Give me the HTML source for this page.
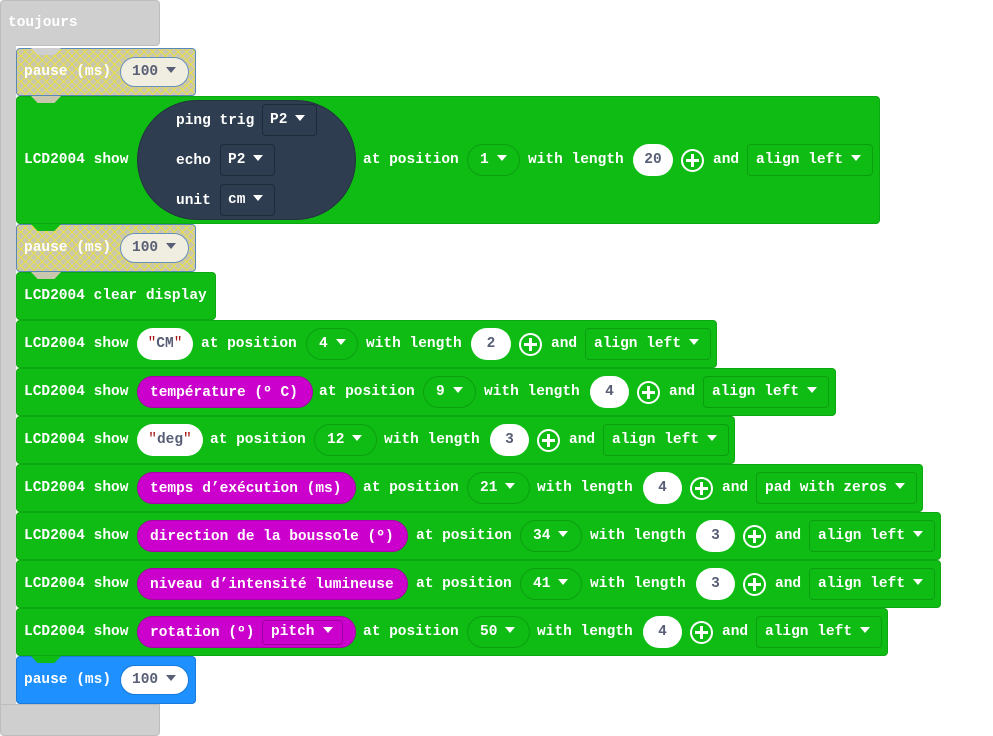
<!DOCTYPE html>
<html><head><meta charset="utf-8"><style>
*{box-sizing:border-box;margin:0;padding:0}
body{width:993px;height:736px;background:#fff;position:relative;overflow:hidden;font-family:"Liberation Mono",monospace;font-weight:bold;font-size:14.5px;color:#fff}
.a{position:absolute}
.blk{position:absolute;left:16px;height:48px;background:#0fbc14;border:1px solid #0ca711;border-radius:4px}
.blk>*{position:absolute}
.t{top:0;line-height:46px;white-space:nowrap}
.pill{top:7px;height:32px;line-height:32px;border-radius:16px;background:#fff;color:#575e75;text-align:center}
.mag{top:7px;height:32px;line-height:32px;border-radius:16px;background:#cc00cc;border:1px solid #a800a8;color:#fff;padding-left:12px;white-space:nowrap}
.dd{top:7px;height:32px;line-height:30px;border:1px solid #0b9f10;border-radius:16px;padding-left:12px;white-space:nowrap}
.sq{border-radius:4px;padding-left:8px}
.tri{display:inline-block;width:0;height:0;border-left:5px solid transparent;border-right:5px solid transparent;border-top:6px solid currentColor;margin-left:8px;vertical-align:2px}
.plus{top:12px;width:23px;height:23px;border:2px solid #fff;border-radius:50%}
.plus:before{content:"";position:absolute;left:8px;top:3px;width:3px;height:13px;background:#fff}
.plus:after{content:"";position:absolute;left:3px;top:8px;width:13px;height:3px;background:#fff}
.q{color:#a31515;font-weight:normal}
.pause{position:absolute;left:16px;width:180px;height:48px;border:1px solid #5b88b8;border-radius:4px;background-color:#c9c7ae;background-image:repeating-linear-gradient(45deg,rgba(235,225,60,.85) 0 1px,transparent 1px 6px),repeating-linear-gradient(-45deg,rgba(235,225,60,.85) 0 1px,transparent 1px 6px)}
.pause>*{position:absolute}
.pp{top:8px;left:103px;width:69px;height:30px;line-height:28px;border-radius:15px;background:#f0eee0;border:1px solid #6a8fbf;color:#575e75;padding-left:11px}
.n{position:absolute;top:-1px;left:14px;width:30px;height:7px;clip-path:polygon(0 0,100% 0,78% 100%,22% 100%)}
</style></head><body>
<div class="a" style="left:0;top:0;width:160px;height:46px;background:#cfcfcf;border:1px solid #bdbdbd;border-radius:4px 4px 4px 0"></div>
<div class="a" style="left:8px;top:0;line-height:46px">toujours</div>
<div class="a" style="left:0;top:40px;width:16px;height:670px;background:#cfcfcf;border-left:1px solid #bdbdbd"></div>
<div class="a" style="left:0;top:704px;width:160px;height:32px;background:#cfcfcf;border:1px solid #bdbdbd;border-radius:0 0 4px 4px"></div>

<div class="pause" style="top:48px"><div class="n" style="background:#cfcfcf"></div><div class="t" style="left:7px">pause (ms)</div><div class="pp">100<span class="tri"></span></div></div>

<div class="blk" style="top:96px;height:128px;width:864px">
<div class="n" style="background:#c9c7ae"></div>
<div class="t" style="left:7px;line-height:126px">LCD2004 show</div>
<div style="left:120px;top:3px;width:219px;height:120px;border-radius:60px;background:#2e3d4f;border:1px solid #243141"></div>
<div class="t" style="left:159px;top:4px;line-height:40px">ping trig</div>
<div style="left:245px;top:7px;width:55px;height:32px;border:1px solid #1e2a38;border-radius:4px;line-height:30px;padding-left:7px">P2<span class="tri"></span></div>
<div class="t" style="left:159px;top:44px;line-height:40px">echo</div>
<div style="left:203px;top:47px;width:55px;height:32px;border:1px solid #1e2a38;border-radius:4px;line-height:30px;padding-left:7px">P2<span class="tri"></span></div>
<div class="t" style="left:159px;top:84px;line-height:40px">unit</div>
<div style="left:203px;top:87px;width:55px;height:32px;border:1px solid #1e2a38;border-radius:4px;line-height:30px;padding-left:7px">cm<span class="tri"></span></div>
<div class="t" style="left:346px;line-height:126px">at position</div>
<div class="dd" style="left:450px;top:47px;width:53px">1<span class="tri"></span></div>
<div class="t" style="left:511px;line-height:126px">with length</div>
<div class="pill" style="left:616px;top:47px;width:40px">20</div>
<div class="plus" style="left:664px;top:52px"></div>
<div class="t" style="left:696px;line-height:126px">and</div>
<div class="dd sq" style="left:730px;top:47px;width:126px">align left<span class="tri"></span></div>
</div>

<div class="pause" style="top:224px"><div class="n" style="background:#0fbc14"></div><div class="t" style="left:7px">pause (ms)</div><div class="pp">100<span class="tri"></span></div></div>

<div class="blk" style="top:272px;width:200px"><div class="n" style="background:#c9c7ae"></div><div class="t" style="left:7px">LCD2004 clear display</div></div>

<div class="blk" style="top:320px;width:701px">
<div class="t" style="left:7px">LCD2004 show</div>
<div class="pill" style="left:120px;width:56px"><span class="q">"</span>CM<span class="q">"</span></div>
<div class="t" style="left:184px">at position</div>
<div class="dd" style="left:289px;width:52px">4<span class="tri"></span></div>
<div class="t" style="left:349px">with length</div>
<div class="pill" style="left:454px;width:40px">2</div>
<div class="plus" style="left:502px"></div>
<div class="t" style="left:534px">and</div>
<div class="dd sq" style="left:568px;width:126px">align left<span class="tri"></span></div>
</div>

<div class="blk" style="top:368px;width:820px">
<div class="t" style="left:7px">LCD2004 show</div>
<div class="mag" style="left:120px;width:176px">température (º C)</div>
<div class="t" style="left:302px">at position</div>
<div class="dd" style="left:406px;width:53px">9<span class="tri"></span></div>
<div class="t" style="left:467px">with length</div>
<div class="pill" style="left:573px;width:39px">4</div>
<div class="plus" style="left:620px"></div>
<div class="t" style="left:652px">and</div>
<div class="dd sq" style="left:686px;width:126px">align left<span class="tri"></span></div>
</div>

<div class="blk" style="top:416px;width:719px">
<div class="t" style="left:7px">LCD2004 show</div>
<div class="pill" style="left:120px;width:66px"><span class="q">"</span>deg<span class="q">"</span></div>
<div class="t" style="left:193px">at position</div>
<div class="dd" style="left:297px;width:63px">12<span class="tri"></span></div>
<div class="t" style="left:367px">with length</div>
<div class="pill" style="left:473px;width:39px">3</div>
<div class="plus" style="left:520px"></div>
<div class="t" style="left:552px">and</div>
<div class="dd sq" style="left:586px;width:126px">align left<span class="tri"></span></div>
</div>

<div class="blk" style="top:464px;width:907px">
<div class="t" style="left:7px">LCD2004 show</div>
<div class="mag" style="left:120px;width:219px">temps d’exécution (ms)</div>
<div class="t" style="left:346px">at position</div>
<div class="dd" style="left:450px;width:63px">21<span class="tri"></span></div>
<div class="t" style="left:520px">with length</div>
<div class="pill" style="left:626px;width:39px">4</div>
<div class="plus" style="left:673px"></div>
<div class="t" style="left:705px">and</div>
<div class="dd sq" style="left:739px;width:161px">pad with zeros<span class="tri"></span></div>
</div>

<div class="blk" style="top:512px;width:925px">
<div class="t" style="left:7px">LCD2004 show</div>
<div class="mag" style="left:120px;width:271px">direction de la boussole (º)</div>
<div class="t" style="left:399px">at position</div>
<div class="dd" style="left:503px;width:62px">34<span class="tri"></span></div>
<div class="t" style="left:573px">with length</div>
<div class="pill" style="left:679px;width:39px">3</div>
<div class="plus" style="left:726px"></div>
<div class="t" style="left:758px">and</div>
<div class="dd sq" style="left:792px;width:126px">align left<span class="tri"></span></div>
</div>

<div class="blk" style="top:560px;width:925px">
<div class="t" style="left:7px">LCD2004 show</div>
<div class="mag" style="left:120px;width:271px">niveau d’intensité lumineuse</div>
<div class="t" style="left:399px">at position</div>
<div class="dd" style="left:503px;width:62px">41<span class="tri"></span></div>
<div class="t" style="left:573px">with length</div>
<div class="pill" style="left:679px;width:39px">3</div>
<div class="plus" style="left:726px"></div>
<div class="t" style="left:758px">and</div>
<div class="dd sq" style="left:792px;width:126px">align left<span class="tri"></span></div>
</div>

<div class="blk" style="top:608px;width:872px">
<div class="t" style="left:7px">LCD2004 show</div>
<div class="mag" style="left:120px;width:219px">rotation (º)</div>
<div style="left:245px;top:11px;width:81px;height:25px;border:1px solid #a000a0;border-radius:4px;line-height:23px;padding-left:8px">pitch<span class="tri"></span></div>
<div class="t" style="left:346px">at position</div>
<div class="dd" style="left:450px;width:63px">50<span class="tri"></span></div>
<div class="t" style="left:520px">with length</div>
<div class="pill" style="left:626px;width:39px">4</div>
<div class="plus" style="left:673px"></div>
<div class="t" style="left:705px">and</div>
<div class="dd sq" style="left:739px;width:126px">align left<span class="tri"></span></div>
</div>

<div class="pause" style="top:656px;background:#1e90ff;border-color:#1a7ad9"><div class="n" style="background:#0fbc14"></div><div class="t" style="left:7px">pause (ms)</div><div class="pp" style="background:#fff;border-color:#1a7ad9">100<span class="tri"></span></div></div>
</body></html>
